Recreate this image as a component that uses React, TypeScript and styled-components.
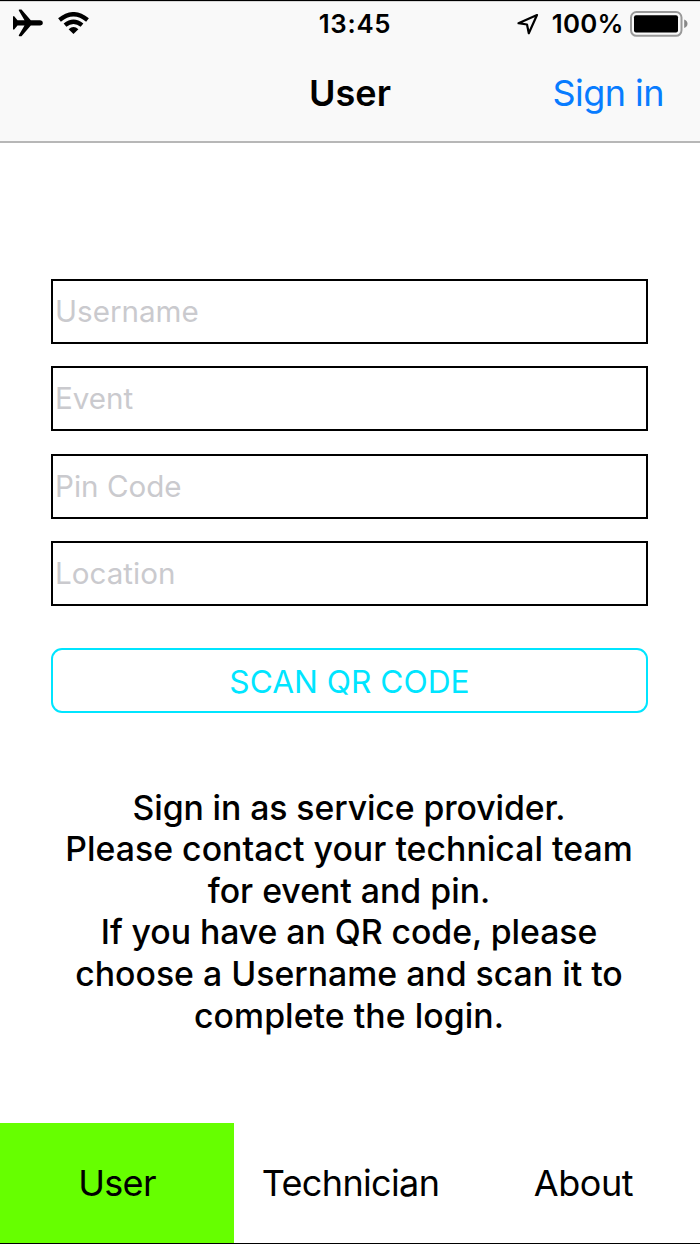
import React from "react";
import styled, { createGlobalStyle } from "styled-components";

const GlobalStyle = createGlobalStyle`
  * { box-sizing: border-box; }
  body { margin: 0; background: #fff; font-family: Inter, "Liberation Sans", sans-serif; color: #000; }
`;

const Screen = styled.div`
  width: 700px;
  height: 1244px;
  display: flex;
  flex-direction: column;
  overflow: hidden;
  border-top: 1px solid #000;
  border-bottom: 1px solid #000;
  background: #fff;
`;

const Header = styled.header`
  height: 142px;
  background: #f9f9f9;
  border-top: 1px solid #d8d8d8;
  border-bottom: 2px solid #b7b7b7;
`;

const StatusBar = styled.div`
  height: 43px;
  display: grid;
  grid-template-columns: 1fr auto 1fr;
  align-items: center;
  padding: 0 12px 0 13px;
  font-size: 25.8px;
  font-weight: 600;
`;

const StatusGroup = styled.div<{ $end?: boolean }>`
  display: flex;
  align-items: center;
  justify-content: ${(p) => (p.$end ? "flex-end" : "flex-start")};
`;

const Label = styled.span<{ $track?: number; $shift?: number }>`
  display: inline-block;
  white-space: nowrap;
  letter-spacing: ${(p) => p.$track ?? 0}px;
  margin-left: ${(p) => p.$shift ?? 0}px;
`;

const StatusIcon = styled.svg<{ $gap?: number; $lift?: number }>`
  display: block;
  flex: none;
  margin-left: ${(p) => p.$gap ?? 0}px;
  margin-bottom: ${(p) => p.$lift ?? 0}px;
`;

const NavBar = styled.nav`
  height: 95px;
  display: grid;
  grid-template-columns: 1fr auto 1fr;
  align-items: center;
  padding: 0 36px;
`;

const Title = styled.h1`
  grid-column: 2;
  margin: 0;
  font-size: 36px;
  font-weight: 600;
`;

const NavAction = styled.button`
  justify-self: end;
  padding: 0;
  border: 0;
  background: none;
  font: 400 36px Inter, sans-serif;
  color: #087cff;
`;

const Content = styled.main`
  flex: 1;
  padding: 136px 52px 0 51px;
`;

const Form = styled.form`
  display: flex;
  flex-direction: column;
  gap: 22.4px;
`;

const Field = styled.input`
  display: block;
  width: 597px;
  height: 65px;
  padding: 0 0 1px 2px;
  border: 2px solid #000;
  border-radius: 0;
  background: #fff;
  font: 400 29.6px Inter, sans-serif;
  outline: none;
  &::placeholder { color: #cacace; opacity: 1; }
`;

const ScanButton = styled.button`
  width: 597px;
  height: 65px;
  margin-top: 19.6px;
  border: 2px solid #00e5ff;
  border-radius: 11px;
  background: #fff;
  color: #00e5ff;
  font: 400 31.7px Inter, sans-serif;
  padding: 2px 0 0;
`;

const Help = styled.p`
  margin: 73.5px 1px 0 0;
  display: flex;
  flex-direction: column;
  align-items: center;
  font-size: 33.8px;
  font-weight: 500;
  line-height: 41.6px;
`;

const TabBar = styled.footer`
  height: 120px;
  display: grid;
  grid-template-columns: 234px 233px 233px;
`;

const Tab = styled.div<{ $active?: boolean }>`
  display: flex;
  align-items: center;
  justify-content: center;
  background: ${(p) => (p.$active ? "#66ff00" : "#fff")};
  font-size: 36px;
`;

const fields = ["Username", "Event", "Pin Code", "Location"];

const helpLines = [
  { text: "Sign in as service provider.", track: -0.1 },
  { text: "Please contact your technical team", track: 0.04 },
  { text: "for event and pin.", track: 0 },
  { text: "If you have an QR code, please", track: -0.05 },
  { text: "choose a Username and scan it to", track: 0 },
  { text: "complete the login.", track: 0.05 },
];

const tabs = [
  { name: "User", track: -0.7, active: true },
  { name: "Technician", track: -0.65 },
  { name: "About", track: -0.4 },
];

export default function App() {
  return (
    <Screen>
      <GlobalStyle />
      <Header>
        <StatusBar>
          <StatusGroup>
            <StatusIcon $lift={2} width="30" height="28" viewBox="0 0 30 28">
              <path d="M0 7.300H1.200L4.500 11.300H11.500L5.800 1.500Q5.500.5 6.500.5H8.500L17.800 11.300H27.200Q29.900 11.600 29.900 13.900T27.200 16.500H17.800L8.500 27.300H6.500Q5.500 27.300 5.800 26.300L11.500 16.500H4.500L1.200 20.500H0z" />
            </StatusIcon>
            <StatusIcon $gap={15} $lift={1} width="31" height="22" viewBox="0 0 31 22">
              <path d="M1.500 8Q15.500-3.600 29.500 8M7 13.200Q15.500 6.200 24 13.200" fill="none" stroke="#000" strokeWidth="4.300" />
              <path d="M10.600 17.200Q15.500 12.800 20.400 17.200L15.500 22z" />
            </StatusIcon>
          </StatusGroup>
          <Label $track={0.7} $shift={9}>13:45</Label>
          <StatusGroup $end>
            <StatusIcon width="22" height="22" viewBox="0 0 22 22">
              <path d="M20 2L1.500 10.200L10 11.500L11.800 20.200z" fill="none" stroke="#000" strokeWidth="2.200" strokeLinejoin="round" />
            </StatusIcon>
            <Label $track={0.2} $shift={13}>100%</Label>
            <StatusIcon $gap={6.5} width="58" height="26" viewBox="0 0 58 26">
              <rect x="1" y="1" width="50.500" height="23.800" rx="5.500" fill="none" stroke="#999" strokeWidth="2" />
              <rect x="4" y="4.300" width="44" height="17.200" rx="2" />
              <path d="M54.200 8.500q3.300 1.300 3.300 4.300t-3.300 4.300z" fill="#888" />
            </StatusIcon>
          </StatusGroup>
        </StatusBar>
        <NavBar>
          <Title><Label>User</Label></Title>
          <NavAction><Label $track={-0.55}>Sign in</Label></NavAction>
        </NavBar>
      </Header>
      <Content>
        <Form>
          {fields.map((name) => (
            <Field key={name} placeholder={name} />
          ))}
          <ScanButton type="button"><Label>SCAN QR CODE</Label></ScanButton>
        </Form>
        <Help>
          {helpLines.map((l) => (
            <Label key={l.text} $track={l.track}>{l.text}</Label>
          ))}
        </Help>
      </Content>
      <TabBar>
        {tabs.map((t) => (
          <Tab key={t.name} $active={t.active}>
            <Label $track={t.track}>{t.name}</Label>
          </Tab>
        ))}
      </TabBar>
    </Screen>
  );
}
